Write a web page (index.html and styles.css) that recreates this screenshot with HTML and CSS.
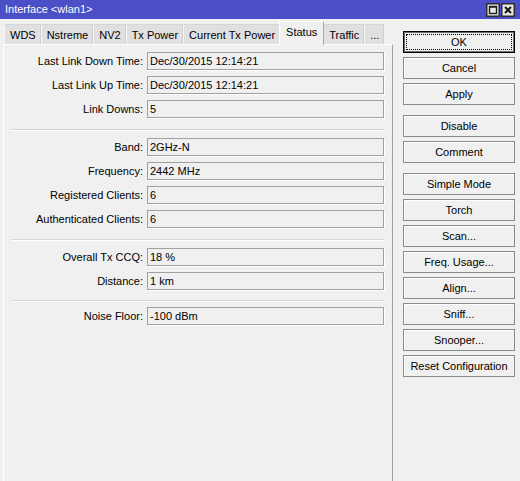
FILE: index.html
```html
<!DOCTYPE html>
<html>
<head>
<meta charset="utf-8">
<link rel="stylesheet" href="styles.css">
</head>
<body>
<div class="window">
  <div class="titlebar">
    <span class="title">Interface &lt;wlan1&gt;</span>
    <div class="winbtns">
      <svg class="winbtn" width="14" height="14" viewBox="0 0 14 14"><rect x="0.75" y="0.75" width="12.5" height="12.5" fill="#e8e8e8" stroke="#2e2e2e" stroke-width="1.5"/><rect x="3.5" y="3.5" width="7" height="7" fill="none" stroke="#1e1e1e" stroke-width="1.4"/><line x1="3" y1="4" x2="11" y2="4" stroke="#1e1e1e" stroke-width="1.4"/></svg>
      <svg class="winbtn" width="14" height="14" viewBox="0 0 14 14"><rect x="0.75" y="0.75" width="12.5" height="12.5" fill="#e8e8e8" stroke="#2e2e2e" stroke-width="1.5"/><path d="M4 4 L10 10 M10 4 L4 10" stroke="#1a1a1a" stroke-width="2" fill="none"/></svg>
    </div>
  </div>
  <div class="content">
    <div class="left">
      <div class="tabs">
        <div class="tab">WDS</div>
        <div class="tab">Nstreme</div>
        <div class="tab">NV2</div>
        <div class="tab">Tx Power</div>
        <div class="tab">Current Tx Power</div>
        <div class="tab active">Status</div>
        <div class="tab">Traffic</div>
        <div class="tab">...</div>
      </div>
      <div class="panel">
        <div class="group">
          <div class="row"><div class="label">Last Link Down Time:</div><div class="field">Dec/30/2015 12:14:21</div></div>
          <div class="row"><div class="label">Last Link Up Time:</div><div class="field">Dec/30/2015 12:14:21</div></div>
          <div class="row"><div class="label">Link Downs:</div><div class="field">5</div></div>
        </div>
        <div class="sep"></div>
        <div class="group">
          <div class="row"><div class="label">Band:</div><div class="field">2GHz-N</div></div>
          <div class="row"><div class="label">Frequency:</div><div class="field">2442 MHz</div></div>
          <div class="row"><div class="label">Registered Clients:</div><div class="field">6</div></div>
          <div class="row"><div class="label">Authenticated Clients:</div><div class="field">6</div></div>
        </div>
        <div class="sep"></div>
        <div class="group">
          <div class="row"><div class="label">Overall Tx CCQ:</div><div class="field">18 %</div></div>
          <div class="row"><div class="label">Distance:</div><div class="field">1 km</div></div>
        </div>
        <div class="sep sep-last"></div>
        <div class="group">
          <div class="row"><div class="label">Noise Floor:</div><div class="field">-100 dBm</div></div>
        </div>
      </div>
    </div>
    <div class="right">
      <div class="bgroup">
        <div class="btn default">OK</div>
        <div class="btn">Cancel</div>
        <div class="btn">Apply</div>
      </div>
      <div class="bgroup">
        <div class="btn">Disable</div>
        <div class="btn">Comment</div>
      </div>
      <div class="bgroup">
        <div class="btn">Simple Mode</div>
        <div class="btn">Torch</div>
        <div class="btn">Scan...</div>
        <div class="btn">Freq. Usage...</div>
        <div class="btn">Align...</div>
        <div class="btn">Sniff...</div>
        <div class="btn">Snooper...</div>
        <div class="btn">Reset Configuration</div>
      </div>
    </div>
  </div>
</div>
</body>
</html>
```
FILE: styles.css
```css
html, body {
  margin: 0;
  padding: 0;
  background: #f0f0f0;
}
body {
  font-family: "Liberation Sans", Arial, sans-serif;
  font-size: 11px;
  color: #000;
  width: 520px;
  height: 481px;
  overflow: hidden;
}
.window {
  display: flex;
  flex-direction: column;
  height: 481px;
}
.titlebar {
  height: 19px;
  background: #4b4fc8;
  display: flex;
  align-items: center;
  padding-left: 5px;
  padding-right: 5px;
  flex: none;
}
.title {
  color: #ffffff;
  font-size: 11px;
  line-height: 19px;
}
.winbtns {
  margin-left: auto;
  display: flex;
  gap: 1px;
}
.winbtn {
  display: block;
}
.content {
  flex: 1;
  display: flex;
  min-height: 0;
}
.left {
  width: 390px;
  margin-left: 3px;
  display: flex;
  flex-direction: column;
}
.tabs {
  display: flex;
  align-items: flex-end;
  height: 24px;
  margin-top: 2px;
  margin-bottom: -1px;
  padding-left: 1px;
}
.tab {
  height: 21px;
  line-height: 20px;
  padding: 0 4px 0 5px;
  background: #e0e0e0;
  border-left: 1px solid #f6f6f6;
  border-top: 1px solid #d6d6d6;
  border-right: 1px solid #cfcfcf;
  box-sizing: border-box;
  white-space: nowrap;
}
.tab.active {
  height: 24px;
  line-height: 21px;
  padding: 0 6px;
  background: #f0f0f0;
  border-left: 1px solid #ffffff;
  border-top: 1px solid #ffffff;
  border-right: 1px solid #a8a8a8;
  position: relative;
  z-index: 1;
  margin: 0 -1px;
}
.panel {
  flex: 1;
  border-top: 1px solid #ffffff;
  border-left: 1px solid #ffffff;
  border-right: 1px solid #a0a0a0;
  padding-top: 7px;
  box-sizing: border-box;
}
.group {
  display: flex;
  flex-direction: column;
  gap: 5px;
}
.row {
  display: grid;
  grid-template-columns: 139px 237px;
  column-gap: 4px;
  height: 19px;
}
.label {
  text-align: right;
  line-height: 18px;
  white-space: nowrap;
}
.field {
  height: 18px;
  box-sizing: border-box;
  border: 1px solid #a0a0a0;
  box-shadow: 1px 1px 0 #ffffff;
  background: #f0f0f0;
  padding-left: 2px;
  line-height: 16px;
  white-space: nowrap;
}
.sep {
  margin: 10px 0 7px 7px;
  width: 373px;
  height: 0;
  border-top: 1px solid #d5d5d5;
  border-bottom: 1px solid #ffffff;
}
.sep.sep-last {
  margin-top: 9px;
  margin-bottom: 5px;
}
.right {
  margin-left: 10px;
  padding-top: 12px;
  width: 112px;
  display: flex;
  flex-direction: column;
  gap: 10px;
}
.bgroup {
  display: flex;
  flex-direction: column;
  gap: 4px;
}
.btn {
  height: 22px;
  box-sizing: border-box;
  border: 1px solid #8a8a8a;
  box-shadow: inset 1px 1px 0 #ffffff;
  background: #f0f0f0;
  text-align: center;
  line-height: 20px;
  white-space: nowrap;
}
.btn.default {
  border: 1px solid #000000;
  box-shadow: inset 0 0 0 1px #6e6e6e;
  outline: 1px dotted #000000;
  outline-offset: -4px;
}
```
